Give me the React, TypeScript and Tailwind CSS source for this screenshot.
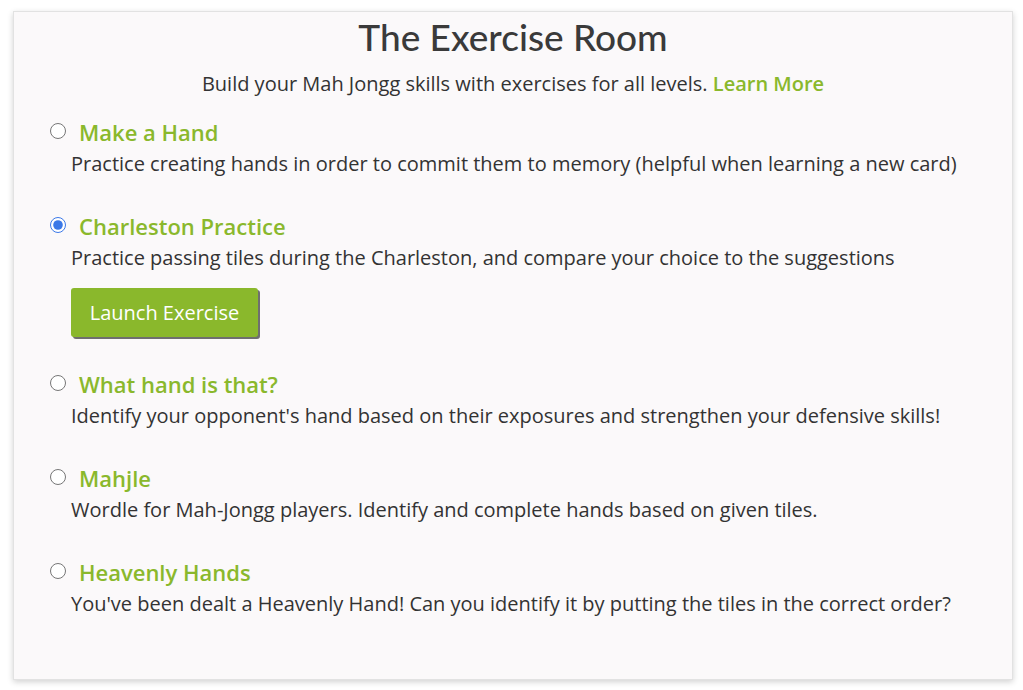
import React, { useState } from 'react';

interface Exercise {
  id: string;
  title: string;
  description: string;
}

const exercises: Exercise[] = [
  {
    id: 'make-hand',
    title: 'Make a Hand',
    description: 'Practice creating hands in order to commit them to memory (helpful when learning a new card)',
  },
  {
    id: 'charleston',
    title: 'Charleston Practice',
    description: 'Practice passing tiles during the Charleston, and compare your choice to the suggestions',
  },
  {
    id: 'what-hand',
    title: 'What hand is that?',
    description: "Identify your opponent's hand based on their exposures and strengthen your defensive skills!",
  },
  {
    id: 'mahjle',
    title: 'Mahjle',
    description: 'Wordle for Mah-Jongg players. Identify and complete hands based on given tiles.',
  },
  {
    id: 'heavenly',
    title: 'Heavenly Hands',
    description: "You've been dealt a Heavenly Hand! Can you identify it by putting the tiles in the correct order?",
  },
];

const App: React.FC = () => {
  const [selected, setSelected] = useState('charleston');

  return (
    <div className="min-h-screen bg-white pt-[11px] pl-[13px] font-['Open_Sans',sans-serif]">
      <div className="w-[1000px] h-[669px] bg-[#fbf9fa] border border-[#e2e2e2] shadow-[0_2px_6px_rgba(0,0,0,0.18)]">
        <h1 className="mt-[5px] text-center text-[37px] leading-[40px] font-medium text-[#3a3a3a] font-['Lato',sans-serif]">
          The Exercise Room
        </h1>
        <p className="mt-[13px] text-center text-[20px] leading-[28px] text-[#333]">
          Build your Mah Jongg skills with exercises for all levels.{' '}
          <a href="#" className="font-semibold text-[#8ab82c]">Learn More</a>
        </p>

        <div className="mt-[18px] pl-[36px] flex flex-col gap-[30px]">
          {exercises.map((ex) => (
            <div key={ex.id}>
              <label className="flex items-center gap-[13px] cursor-pointer">
                <input
                  type="radio"
                  name="exercise"
                  checked={selected === ex.id}
                  onChange={() => setSelected(ex.id)}
                  className="w-[16px] h-[16px] m-0 -mt-[3px] accent-[#3b78e7]"
                />
                <span className="text-[22px] leading-[32px] font-semibold text-[#8ab82c]">{ex.title}</span>
              </label>
              <p className="pl-[21px] text-[20px] leading-[32px] text-[#333]">{ex.description}</p>
              {selected === ex.id && (
                <button className="ml-[21px] mt-[14px] mb-[1px] w-[187px] h-[49px] rounded-[3px] bg-[#8ab82c] text-white text-[20px] shadow-[2px_2px_0_#6f6f6f]">
                  Launch Exercise
                </button>
              )}
            </div>
          ))}
        </div>
      </div>
    </div>
  );
};

export default App;
